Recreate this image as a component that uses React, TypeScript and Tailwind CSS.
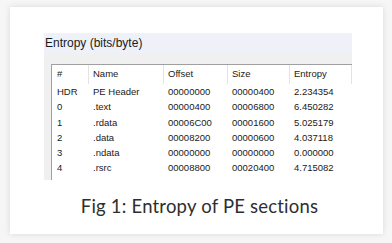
const rows = [
  ['HDR', 'PE Header', '00000000', '00000400', '2.234354'],
  ['0', '.text', '00000400', '00006800', '6.450282'],
  ['1', '.rdata', '00006C00', '00001600', '5.025179'],
  ['2', '.data', '00008200', '00000600', '4.037118'],
  ['3', '.ndata', '00000000', '00000000', '0.000000'],
  ['4', '.rsrc', '00008800', '00020400', '4.715082'],
]

const cols = [
  { label: '#', w: 'w-[37px] pl-[5px]' },
  { label: 'Name', w: 'w-[75px] pl-[4px]' },
  { label: 'Offset', w: 'w-[64px] pl-[4px]' },
  { label: 'Size', w: 'w-[62px] pl-[4px]' },
  { label: 'Entropy', w: 'w-[62px] pl-[4px]' },
]

function EntropyPanel() {
  return (
    <div className="w-[308px] h-[147px] flex flex-col">
      <div className="h-[20px] bg-[#eef1f8] flex items-center pl-[1px] text-[12px] text-[#1b1b1b] [font-family:'Liberation_Sans',sans-serif]">
        Entropy (bits/byte)
      </div>
      <div className="flex-1 bg-[#f0f0f0] pl-[7px] pt-[11px] flex">
        <div className="flex-1 bg-white border-l border-t border-[#a0a0a0] [font-family:'Liberation_Sans',sans-serif] text-[9.5px] text-[#1a1a1a]">
          <div className="flex h-[19px]">
            {cols.map(c => (
              <div key={c.label} className={`${c.w} border-r border-[#e3e3e3] flex items-center`}>
                {c.label}
              </div>
            ))}
          </div>
          <div className="pt-[0.5px]">
            {rows.map(r => (
              <div key={r[0]} className="flex h-[15.25px] items-center">
                {r.map((cell, i) => (
                  <div key={i} className={`${cols[i].w} pr-[1px]`}>{cell}</div>
                ))}
              </div>
            ))}
          </div>
        </div>
      </div>
    </div>
  )
}

export default function App() {
  return (
    <div className="w-[392px] h-[243px] bg-[#f6f6f6] pt-[7px] pl-[10px]">
      <div className="w-[373px] h-[227px] bg-white shadow-[0_0_6px_rgba(0,0,0,0.12)] flex flex-col">
        <div className="pl-[34px] pt-[26px]">
          <EntropyPanel />
        </div>
        <div className="mt-[13px] text-center pl-[6px] text-[18.5px] tracking-[0.2px] text-[#2e2e2e] [font-family:'Lato',sans-serif]">
          Fig 1: Entropy of PE sections
        </div>
      </div>
    </div>
  )
}
